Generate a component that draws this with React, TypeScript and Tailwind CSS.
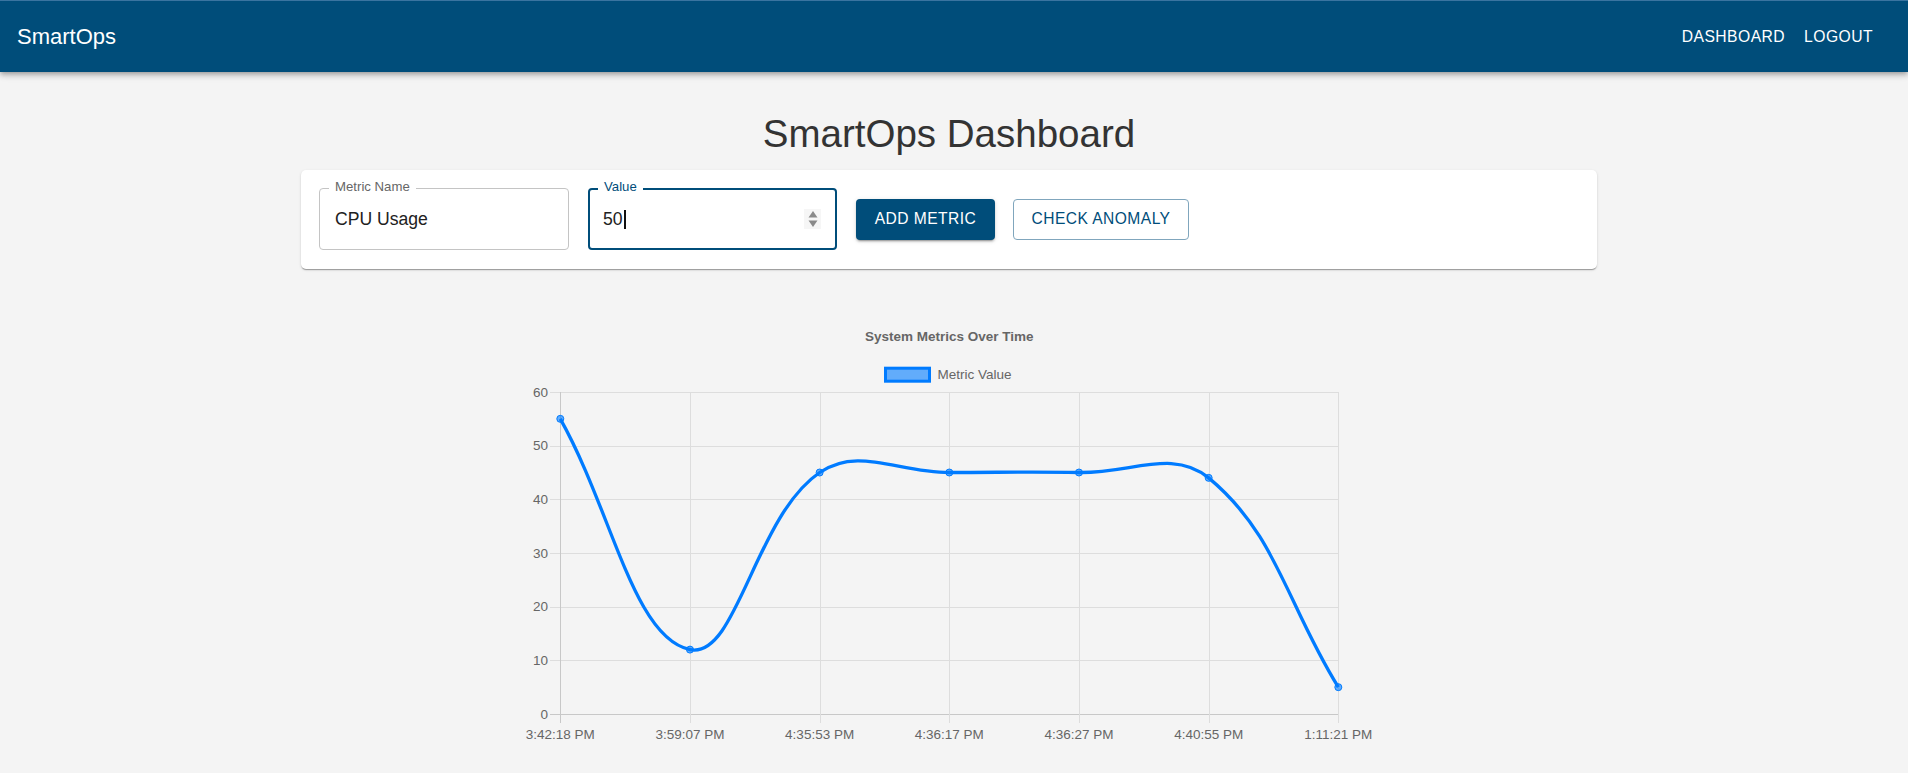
import React from 'react';

const FONT = "font-['Liberation_Sans',Arial,Helvetica,sans-serif]";

// chart geometry (page coordinates, the svg viewBox uses the same numbers)
const LEFT = 560.3;
const STEP = 129.67;
const TOP = 392;
const BOTTOM = 714;
const RIGHT = LEFT + STEP * 6;

const labels = ['3:42:18 PM', '3:59:07 PM', '4:35:53 PM', '4:36:17 PM', '4:36:27 PM', '4:40:55 PM', '1:11:21 PM'];
const values = [55, 12, 45, 45, 45, 44, 5];

const yOf = (v: number) => BOTTOM - (v * (BOTTOM - TOP)) / 60;

interface Pt {
  x: number;
  y: number;
}

const clamp = (p: Pt): Pt => ({
  x: Math.min(Math.max(p.x, LEFT), RIGHT),
  y: Math.min(Math.max(p.y, TOP), BOTTOM),
});

// same spline as chart.js with tension 0.4
function buildPath(pts: Pt[], t = 0.4) {
  const cps = pts.map((p, i) => {
    const prev = pts[i - 1] || p;
    const next = pts[i + 1] || p;
    const d01 = Math.hypot(p.x - prev.x, p.y - prev.y);
    const d12 = Math.hypot(next.x - p.x, next.y - p.y);
    let s01 = d01 / (d01 + d12);
    let s12 = d12 / (d01 + d12);
    if (!isFinite(s01)) s01 = 0;
    if (!isFinite(s12)) s12 = 0;
    const fa = t * s01;
    const fb = t * s12;
    return {
      prev: clamp({ x: p.x - fa * (next.x - prev.x), y: p.y - fa * (next.y - prev.y) }),
      next: clamp({ x: p.x + fb * (next.x - prev.x), y: p.y + fb * (next.y - prev.y) }),
    };
  });
  let d = `M ${pts[0].x} ${pts[0].y}`;
  for (let i = 1; i < pts.length; i++) {
    const a = cps[i - 1].next;
    const b = cps[i].prev;
    d += ` C ${a.x} ${a.y} ${b.x} ${b.y} ${pts[i].x} ${pts[i].y}`;
  }
  return d;
}

function MetricsChart() {
  const pts = values.map((v, i) => ({ x: LEFT + i * STEP, y: yOf(v) }));
  const path = buildPath(pts);
  const ticks = [0, 10, 20, 30, 40, 50, 60];

  return (
    <svg width={900} height={460} viewBox="499 300 900 460" className="block mx-auto mt-[31px]">
      <text x={949.3} y={341} textAnchor="middle" fontSize={13.5} fontWeight="bold" fill="#666" fontFamily="Liberation Sans, Arial, sans-serif">
        System Metrics Over Time
      </text>

      {/* legend */}
      <rect x={885.5} y={368.2} width={44} height={13} fill="rgba(0,123,255,0.6)" stroke="#007bff" strokeWidth={3} />
      <text x={937.5} y={378.5} fontSize={13.5} fill="#666" fontFamily="Liberation Sans, Arial, sans-serif">
        Metric Value
      </text>

      {/* grid */}
      <g shapeRendering="crispEdges">
        {ticks.map((v) => (
          <line key={v} x1={550} x2={RIGHT} y1={Math.round(yOf(v)) + 0.5} y2={Math.round(yOf(v)) + 0.5} stroke={v === 0 ? '#c8c8c8' : '#dddddd'} strokeWidth={1} />
        ))}
        {labels.map((_, i) => (
          <line key={i} x1={Math.round(LEFT + i * STEP) + 0.5} x2={Math.round(LEFT + i * STEP) + 0.5} y1={TOP} y2={723} stroke={i === 0 ? '#c8c8c8' : '#dddddd'} strokeWidth={1} />
        ))}
      </g>

      {ticks.map((v) => (
        <text key={v} x={548} y={yOf(v) + 4.8} textAnchor="end" fontSize={13.5} fill="#666" fontFamily="Liberation Sans, Arial, sans-serif">
          {v}
        </text>
      ))}
      {labels.map((l, i) => (
        <text key={l} x={LEFT + i * STEP} y={739} textAnchor="middle" fontSize={13.5} fill="#666" fontFamily="Liberation Sans, Arial, sans-serif">
          {l}
        </text>
      ))}

      <path d={path} fill="none" stroke="#007bff" strokeWidth={3.3} strokeLinejoin="round" />
      {pts.map((p, i) => (
        <circle key={i} cx={p.x} cy={p.y} r={3.5} fill="rgba(0,123,255,0.6)" stroke="#007bff" strokeWidth={1} />
      ))}
    </svg>
  );
}

export default function App() {
  return (
    <div className={`min-h-screen bg-[#f4f4f4] ${FONT}`}>
      {/* App bar */}
      <header className="h-[72px] w-full bg-[#004d7a] border-t border-[#3a74a0] flex items-center justify-between pl-[17px] pr-[35px] shadow-[0px_2px_4px_-1px_rgba(0,0,0,0.2),0px_4px_5px_0px_rgba(0,0,0,0.14),0px_1px_10px_0px_rgba(0,0,0,0.12)] relative z-10">
        <span className="text-[22px] leading-[35px] text-white">SmartOps</span>
        <nav className="flex items-center gap-[19px] text-white text-[15.7px] tracking-[0.44px]">
          <span>DASHBOARD</span>
          <span>LOGOUT</span>
        </nav>
      </header>

      <main className="w-[1898px] pt-[39px] pb-[10px]">
        <h1 className="text-center text-[38.5px] leading-[46px] text-[#333]">SmartOps Dashboard</h1>

        {/* form card */}
        <div className="mt-[13px] mx-auto w-[1296px] bg-white rounded-[5px] pt-[18px] pb-[19px] px-[18px] flex items-center shadow-[0px_2px_1px_-1px_rgba(0,0,0,0.2),0px_1px_1px_0px_rgba(0,0,0,0.14),0px_1px_3px_0px_rgba(0,0,0,0.12)]">
          <div className="relative w-[250px] h-[62px] border border-[#c4c4c4] rounded-[4px] flex items-center pl-[15px]">
            <span className="absolute left-[9px] top-[-10px] px-[6px] bg-white text-[13.2px] leading-[16px] text-[#666]">Metric Name</span>
            <span className="text-[17.6px] text-[#212121]">CPU Usage</span>
          </div>

          <div className="relative ml-[19px] w-[249px] h-[62px] border-2 border-[#004d7a] rounded-[4px] flex items-center pl-[13px] pr-[14px]">
            <span className="absolute left-[8px] top-[-11px] px-[6px] bg-white text-[13.2px] leading-[16px] text-[#004d7a]">Value</span>
            <span className="text-[17.6px] text-[#212121]">50</span>
            <span className="w-[2px] h-[19px] bg-[#111] ml-[1px]" />
            <span className="ml-auto w-[17px] h-[20px] bg-[#f6f6f6] flex items-center justify-center">
              <svg width="10" height="18" viewBox="0 0 10 18">
                <path d="M5 1 L9.5 7.5 L0.5 7.5 Z" fill="#8a8a8a" />
                <path d="M5 17 L9.5 10.5 L0.5 10.5 Z" fill="#8a8a8a" />
              </svg>
            </span>
          </div>

          <button className="ml-[19px] w-[139px] h-[41px] rounded-[4px] bg-[#004d7a] text-white text-[15.6px] tracking-[0.44px] shadow-[0px_3px_1px_-2px_rgba(0,0,0,0.2),0px_2px_2px_0px_rgba(0,0,0,0.14),0px_1px_5px_0px_rgba(0,0,0,0.12)]">
            ADD METRIC
          </button>
          <button className="ml-[18px] w-[176px] h-[41px] rounded-[4px] bg-white border border-[#80a6bd] text-[#004d7a] text-[15.6px] tracking-[0.44px]">
            CHECK ANOMALY
          </button>
        </div>

        <MetricsChart />
      </main>
    </div>
  );
}
